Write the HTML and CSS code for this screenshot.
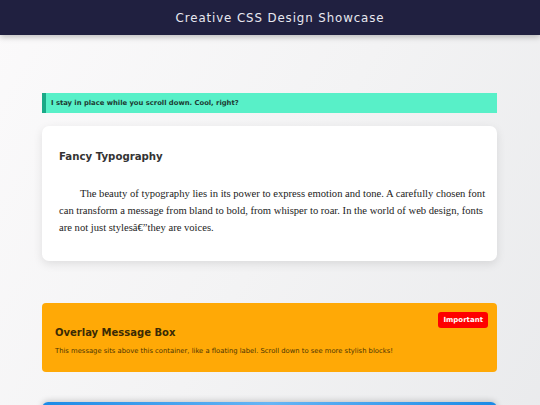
FILE: index.html
```html
<!DOCTYPE html>
<html>
<head>
<meta charset="utf-8">
<link rel="stylesheet" href="styles.css">
</head>
<body>
<header class="site-header">Creative CSS Design Showcase</header>
<main class="content">
  <div class="sticky-note">I stay in place while you scroll down. Cool, right?</div>
  <section class="card">
    <h2 class="card-title">Fancy Typography</h2>
    <p class="fancy-text">The beauty of typography lies in its power to express emotion and tone. A carefully chosen font can transform a message from bland to bold, from whisper to roar. In the world of web design, fonts are not just stylesâ€&#8221;they are voices.</p>
  </section>
  <section class="overlay-box">
    <span class="badge">Important</span>
    <h2 class="overlay-title">Overlay Message Box</h2>
    <p class="overlay-text">This message sits above this container, like a floating label. Scroll down to see more stylish blocks!</p>
  </section>
  <section class="blue-box"></section>
</main>
</body>
</html>
```
FILE: styles.css
```css
html, body {
  margin: 0;
  padding: 0;
}
body {
  font-family: Verdana, "DejaVu Sans", sans-serif;
  background: linear-gradient(120deg, #fbfafb 0%, #f3f3f4 50%, #e9eaec 100%);
  min-height: 405px;
  overflow: hidden;
}
.site-header {
  height: 35px;
  background: #202040;
  color: #e8e8f0;
  font-size: 11.8px;
  letter-spacing: 0.9px;
  display: flex;
  align-items: center;
  justify-content: center;
  padding-left: 20px;
  box-shadow: 0 2px 6px rgba(0,0,0,0.25);
}
.content {
  padding: 58px 43px 0 42px;
  display: flex;
  flex-direction: column;
}
.sticky-note {
  height: 20px;
  box-sizing: border-box;
  background: #58f0c8;
  border-left: 4px solid #1aa987;
  padding: 0 0 0 5px;
  display: flex;
  align-items: center;
  font-size: 6.8px;
  font-weight: bold;
  color: #1d3a33;
}
.card {
  margin-top: 13px;
  height: 135px;
  box-sizing: border-box;
  background: #fff;
  border-radius: 7px;
  box-shadow: 0 3px 10px rgba(0,0,0,0.1);
  padding: 25px 11px 0 17px;
}
.card-title {
  margin: 0;
  font-size: 10.2px;
  color: #333;
}
.fancy-text {
  margin: 23px 0 0 0;
  font-family: Georgia, "Liberation Serif", serif;
  font-size: 10.6px;
  line-height: 17px;
  text-indent: 21px;
  color: #222;
}
.overlay-box {
  position: relative;
  margin-top: 42px;
  height: 69px;
  box-sizing: border-box;
  background: #ffa906;
  border-radius: 4px;
  padding: 24px 13px 0 13px;
}
.badge {
  position: absolute;
  top: 9px;
  right: 9px;
  background: #ff0000;
  color: #fff;
  font-size: 7px;
  font-weight: bold;
  padding: 4px 5px;
  border-radius: 3px;
}
.overlay-title {
  margin: 0;
  font-size: 10px;
  color: #3a2a05;
}
.overlay-text {
  margin: 9px 0 0 0;
  font-size: 6.8px;
  color: #4a3405;
}
.blue-box {
  margin-top: 30px;
  height: 60px;
  border-radius: 6px;
  background: linear-gradient(90deg, #1a8ae6 0%, #66b5f5 50%, #1a8ae6 100%);
  box-shadow: 0 -1px 6px rgba(0,0,0,0.2);
}
```
